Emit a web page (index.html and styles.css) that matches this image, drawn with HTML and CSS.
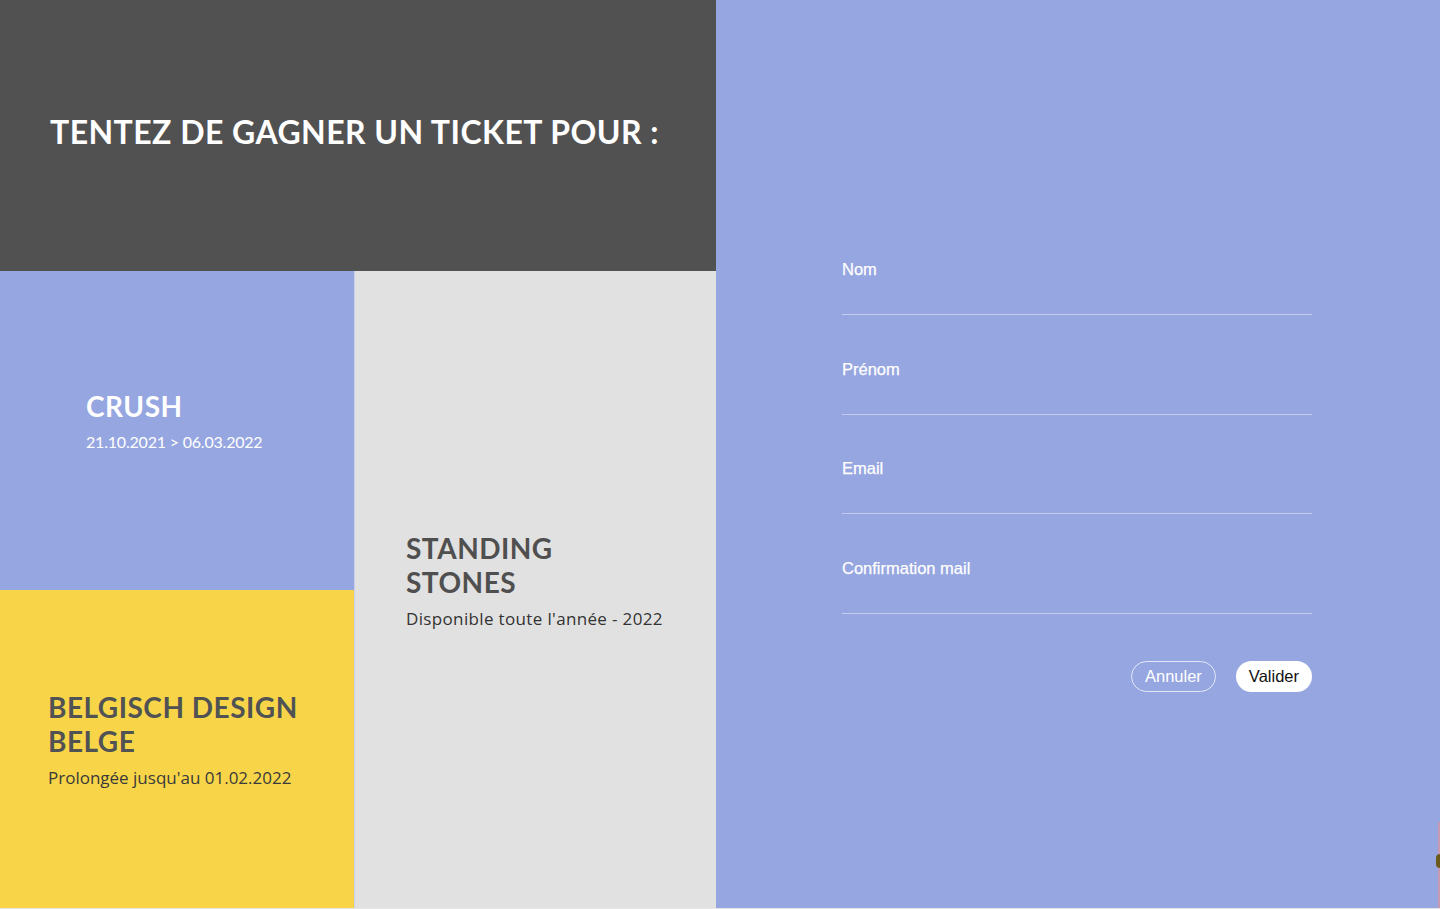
FILE: index.html
```html
<!DOCTYPE html>
<html lang="fr">
<head>
<meta charset="utf-8">
<title>Tentez de gagner un ticket</title>
<link rel="stylesheet" href="styles.css">
</head>
<body>
<div class="page">
  <section class="left">
    <header class="hero">
      <h1>TENTEZ DE GAGNER UN TICKET POUR :</h1>
    </header>
    <div class="tiles">
      <div class="col">
        <div class="tile tile-crush">
          <h2>CRUSH</h2>
          <p>21.10.2021 &gt; 06.03.2022</p>
        </div>
        <div class="tile tile-belge">
          <h2>BELGISCH DESIGN<br>BELGE</h2>
          <p>Prolongée jusqu'au 01.02.2022</p>
        </div>
      </div>
      <div class="tile tile-stones">
        <h2>STANDING<br>STONES</h2>
        <p>Disponible toute l'année - 2022</p>
      </div>
    </div>
  </section>
  <section class="right">
    <form class="form">
      <label class="field"><span>Nom</span><input type="text"></label>
      <label class="field"><span>Prénom</span><input type="text"></label>
      <label class="field"><span>Email</span><input type="email"></label>
      <label class="field"><span>Confirmation mail</span><input type="email"></label>
      <div class="actions">
        <button type="button" class="btn btn-ghost">Annuler</button>
        <button type="button" class="btn btn-solid">Valider</button>
      </div>
    </form>
    <div class="edge"><span class="dot"></span></div>
  </section>
</div>
</body>
</html>
```
FILE: styles.css
```css
* { box-sizing: border-box; }
html, body { margin: 0; padding: 0; }
body {
  background: #e6e6e6;
  width: 1440px;
  height: 909px;
  overflow: hidden;
  font-family: "Lato", "Open Sans", sans-serif;
}
.page {
  display: flex;
  height: 908px;
}
.left {
  width: 716px;
  display: flex;
  flex-direction: column;
}
.hero {
  height: 271px;
  background: #515151;
  display: flex;
  align-items: center;
  padding: 0 0 9px 50px;
}
.hero h1 {
  margin: 0;
  color: #fff;
  font-size: 32px;
  font-weight: 700;
  letter-spacing: 0.45px;
}
.tiles {
  flex: 1;
  display: flex;
}
.col {
  width: 354px;
  display: flex;
  flex-direction: column;
}
.tile {
  display: flex;
  flex-direction: column;
  justify-content: center;
}
.tile h2 {
  margin: 0;
  font-size: 28px;
  line-height: 34px;
  font-weight: 700;
  letter-spacing: 0.5px;
}
.tile p {
  margin: 0;
  font-family: "Open Sans", "Lato", sans-serif;
  font-size: 17px;
}
.tile-crush {
  height: 319px;
  background: #96a6e0;
  padding: 0 0 22px 86px;
  color: #fff;
}
.tile-crush p {
  margin-top: 9px;
  font-family: "Lato", sans-serif;
  font-size: 16px;
  letter-spacing: -0.2px;
}
.tile-belge {
  flex: 1;
  background: #f8d548;
  padding: 0 0 20px 48px;
  color: #4c4c4c;
}
.tile-belge h2 { color: #505254; }
.tile-belge p { margin-top: 8px; color: #3a3a3a; }
.tile-stones {
  flex: 1;
  background: #e1e1e1;
  border-left: 1px solid #c8cfe9;
  padding: 0 0 18px 51px;
  color: #4f4f4f;
}
.tile-stones p { margin-top: 8px; color: #333; letter-spacing: 0.35px; }
.right {
  position: relative;
  flex: 1;
  background: #96a6e0;
  padding: 256px 0 0 126px;
}
.form {
  width: 470px;
  display: flex;
  flex-direction: column;
}
.field {
  display: flex;
  flex-direction: column;
  height: 99.5px;
  font-family: "Liberation Sans", Arial, sans-serif;
}
.field span {
  color: #fff;
  font-size: 16.5px;
  line-height: 26px;
  font-weight: 400;
  -webkit-text-stroke: 0.25px #fff;
}
.field input {
  margin-top: 8px;
  height: 25px;
  border: 0;
  border-bottom: 1px solid #c3cbee;
  background: transparent;
  outline: none;
  color: #fff;
  font: inherit;
}
.actions {
  display: flex;
  justify-content: flex-end;
  gap: 20px;
  margin-top: 7px;
}
.btn {
  height: 31px;
  border-radius: 16px;
  font-family: "Liberation Sans", Arial, sans-serif;
  font-size: 16.5px;
  padding: 0 13px;
  cursor: pointer;
}
.btn-ghost {
  background: transparent;
  border: 1.5px solid #e3e7f8;
  color: #fff;
  margin-left: -2px;
}
.btn-solid {
  background: #fff;
  border: 0;
  color: #111;
}
.edge {
  position: absolute;
  right: 0;
  top: 822px;
  width: 2px;
  height: 86px;
  background: #c79ab0;
}
.dot {
  position: absolute;
  right: 0;
  top: 32px;
  width: 4px;
  height: 14px;
  border-radius: 7px 0 0 7px;
  background: #6b5a1c;
}
```
